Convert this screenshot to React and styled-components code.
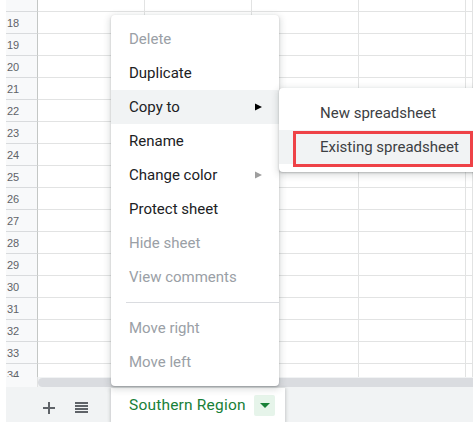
import React from "react";
import styled, { createGlobalStyle } from "styled-components";

const GlobalStyle = createGlobalStyle`
  html, body {
    margin: 0;
    padding: 0;
    background: #fff;
  }
  body {
    font-family: Roboto, "Liberation Sans", Arial, sans-serif;
  }
`;

const Screen = styled.div`
  position: relative;
  width: 473px;
  height: 422px;
  overflow: hidden;
  background: #fff;
  padding-left: 6px;
  box-sizing: border-box;
  display: flex;
  flex-direction: column;
`;

const Sheet = styled.div`
  height: 377px;
  overflow: hidden;
  display: flex;
  flex-direction: column;
  flex-shrink: 0;
`;

const Row = styled.div`
  display: grid;
  grid-template-columns: 32px 107px 107px 107px 107px 1fr;
  height: ${p => p.$h || 22}px;
  flex-shrink: 0;
`;

const RowHead = styled.div`
  box-sizing: border-box;
  background: #f8f9fa;
  border-right: 1px solid #c4c7c5;
  border-bottom: 1px solid #d9dbdd;
  font-family: Arial, "Liberation Sans", sans-serif;
  font-size: 11px;
  color: #5f6368;
  display: flex;
  align-items: center;
  padding-left: 1px;
`;

const Cell = styled.div`
  box-sizing: border-box;
  border-right: 1px solid #e2e3e3;
  border-bottom: 1px solid #e2e3e3;
`;

const ScrollBand = styled.div`
  height: 10px;
  display: grid;
  grid-template-columns: 32px 1fr;
  flex-shrink: 0;
  background: #f1f3f4;
`;

const ScrollCorner = styled.div`
  background: #f8f9fa;
  border-right: 1px solid #e2e3e3;
  box-sizing: border-box;
`;

const Thumb = styled.div`
  margin-top: 1px;
  height: 9px;
  background: #dadce0;
  border-radius: 5px 0 0 5px;
`;

const TabBar = styled.div`
  flex: 1;
  background: #f1f3f4;
  display: flex;
  align-items: stretch;
`;

const BarButton = styled.div`
  width: 33px;
  display: flex;
  align-items: center;
  justify-content: center;
  padding-top: 6px;
`;

const Buttons = styled.div`
  display: flex;
  padding-left: 26px;
  width: 105px;
  box-sizing: border-box;
`;

const Tab = styled.div`
  margin-top: 1px;
  width: 174px;
  background: #fff;
  box-shadow: 0 1px 3px 1px rgba(60, 64, 67, 0.22);
  display: flex;
  align-items: center;
  padding: 0 10px 0 18px;
  box-sizing: border-box;
  gap: 4px;
`;

const TabLabel = styled.span`
  font-size: 15.5px;
  font-weight: 400;
  color: #188038;
  letter-spacing: 0.2px;
  white-space: nowrap;
  flex: 1;
`;

const TabDrop = styled.div`
  width: 21px;
  height: 21px;
  background: #e6f4ea;
  border-radius: 2px;
  display: flex;
  align-items: center;
  justify-content: center;
`;

const Menu = styled.div`
  position: absolute;
  left: ${p => p.$left}px;
  top: ${p => p.$top}px;
  width: ${p => p.$width}px;
  background: #fff;
  border-radius: 4px;
  box-shadow: 0 2px 6px 2px rgba(60, 64, 67, 0.15), 0 1px 2px 0 rgba(60, 64, 67, 0.3);
  padding: ${p => p.$pad}px 0;
  box-sizing: border-box;
`;

const Item = styled.div`
  height: 34px;
  display: flex;
  align-items: center;
  padding-left: ${p => p.$indent || 18}px;
  padding-right: 16px;
  font-size: 15px;
  color: ${p => (p.$disabled ? "#9aa0a6" : p.$soft ? "#3c4043" : "#202124")};
  background: ${p => (p.$active ? "#f1f3f4" : "transparent")};
  white-space: nowrap;
`;

const ItemText = styled.span`
  flex: 1;
`;

const Separator = styled.div`
  height: 1px;
  background: #dadce0;
  margin: 8px 0 8px 15px;
`;

const Highlight = styled.div`
  position: absolute;
  left: 293px;
  top: 131px;
  width: 180px;
  height: 36px;
  border: 3px solid #ee4247;
  box-sizing: border-box;
`;

const Arrow = ({ color }) => (
  <svg width="9" height="8" viewBox="0 0 9 8">
    <polygon points="1,0.5 8,4 1,7.5" fill={color} />
  </svg>
);

const rows = [];
for (let n = 18; n <= 34; n++) rows.push(n);

export default function App() {
  return (
    <>
      <GlobalStyle />
      <Screen>
        <Sheet>
          <Row $h={12}>
            <RowHead />
            <Cell />
            <Cell />
            <Cell />
            <Cell />
            <Cell />
          </Row>
          {rows.map(n => (
            <Row key={n}>
              <RowHead>{n}</RowHead>
              <Cell />
              <Cell />
              <Cell />
              <Cell />
              <Cell />
            </Row>
          ))}
        </Sheet>
        <ScrollBand>
          <ScrollCorner />
          <Thumb />
        </ScrollBand>
        <TabBar>
          <Buttons>
            <BarButton>
              <svg width="12" height="12" viewBox="0 0 12 12">
                <rect x="5" y="0" width="2" height="12" fill="#5f6368" />
                <rect x="0" y="5" width="12" height="2" fill="#5f6368" />
              </svg>
            </BarButton>
            <BarButton>
              <svg width="13" height="11" viewBox="0 0 13 11">
                <rect x="0" y="0" width="13" height="2" fill="#5f6368" />
                <rect x="0" y="3" width="13" height="2" fill="#5f6368" />
                <rect x="0" y="6" width="13" height="2" fill="#5f6368" />
                <rect x="0" y="9" width="13" height="2" fill="#5f6368" />
              </svg>
            </BarButton>
          </Buttons>
          <Tab>
            <TabLabel>Southern Region</TabLabel>
            <TabDrop>
              <svg width="10" height="5" viewBox="0 0 10 5">
                <polygon points="0,0 10,0 5,5" fill="#188038" />
              </svg>
            </TabDrop>
          </Tab>
        </TabBar>

        <Menu $left={111} $top={15} $width={168} $pad={7}>
          <Item $disabled>Delete</Item>
          <Item>Duplicate</Item>
          <Item $active>
            <ItemText>Copy to</ItemText>
            <Arrow color="#000" />
          </Item>
          <Item>Rename</Item>
          <Item>
            <ItemText>Change color</ItemText>
            <Arrow color="#9e9e9e" />
          </Item>
          <Item>Protect sheet</Item>
          <Item $disabled>Hide sheet</Item>
          <Item $disabled>View comments</Item>
          <Separator />
          <Item $disabled>Move right</Item>
          <Item $disabled>Move left</Item>
        </Menu>

        <Menu $left={279} $top={88} $width={210} $pad={8}>
          <Item $indent={41} $soft>New spreadsheet</Item>
          <Item $indent={41} $soft $active>Existing spreadsheet</Item>
        </Menu>

        <Highlight />
      </Screen>
    </>
  );
}
